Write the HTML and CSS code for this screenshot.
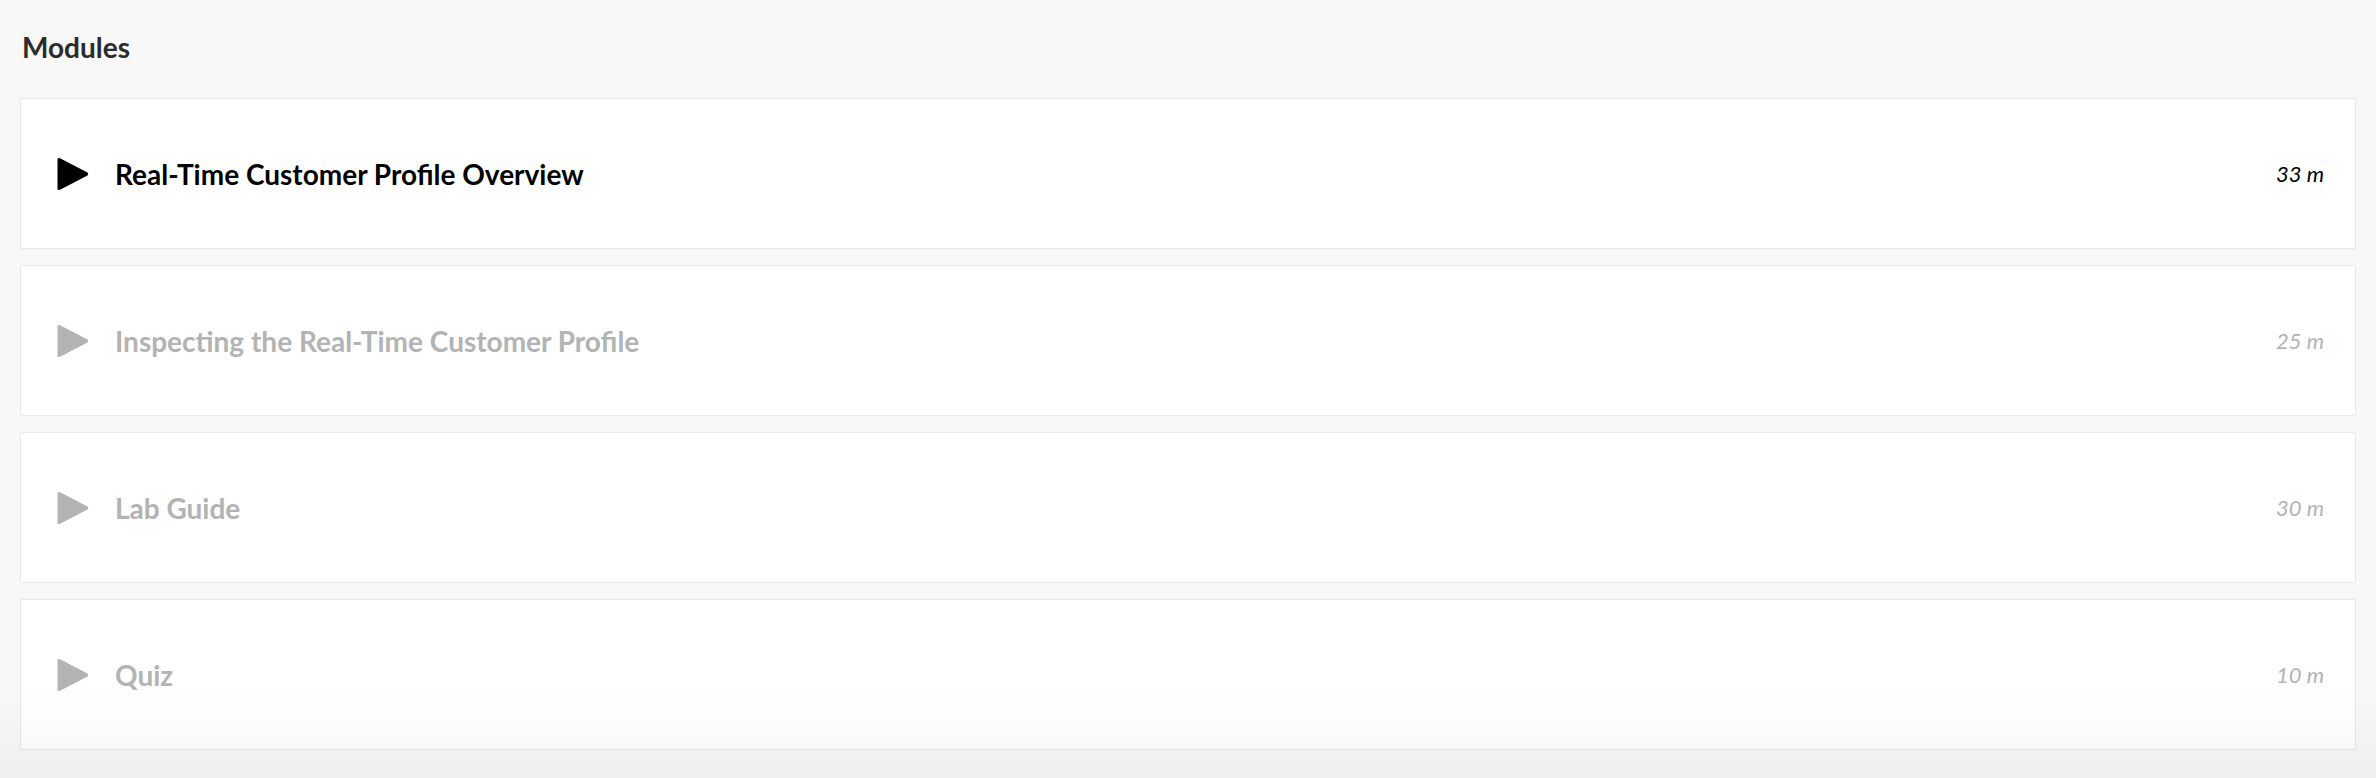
FILE: index.html
```html
<!DOCTYPE html>
<html lang="en">
<head>
<meta charset="utf-8">
<title>Modules</title>
<link rel="stylesheet" href="styles.css">
</head>
<body>
<main class="modules">
  <h2 class="modules-title">Modules</h2>
  <ul class="module-list">
    <li class="module-card is-active">
      <svg class="play-icon" viewBox="0 0 32 34" width="32" height="34" aria-hidden="true"><path d="M3 1.2 L30.5 15.6 Q32 17 30.5 18.4 L3 32.8 Q0.5 33.8 0.5 31.2 L0.5 2.8 Q0.5 0.2 3 1.2 Z"/></svg>
      <span class="module-name">Real-Time Customer Profile Overview</span>
      <span class="module-time">33 m</span>
    </li>
    <li class="module-card">
      <svg class="play-icon" viewBox="0 0 32 34" width="32" height="34" aria-hidden="true"><path d="M3 1.2 L30.5 15.6 Q32 17 30.5 18.4 L3 32.8 Q0.5 33.8 0.5 31.2 L0.5 2.8 Q0.5 0.2 3 1.2 Z"/></svg>
      <span class="module-name">Inspecting the Real-Time Customer Profile</span>
      <span class="module-time">25 m</span>
    </li>
    <li class="module-card">
      <svg class="play-icon" viewBox="0 0 32 34" width="32" height="34" aria-hidden="true"><path d="M3 1.2 L30.5 15.6 Q32 17 30.5 18.4 L3 32.8 Q0.5 33.8 0.5 31.2 L0.5 2.8 Q0.5 0.2 3 1.2 Z"/></svg>
      <span class="module-name">Lab Guide</span>
      <span class="module-time">30 m</span>
    </li>
    <li class="module-card">
      <svg class="play-icon" viewBox="0 0 32 34" width="32" height="34" aria-hidden="true"><path d="M3 1.2 L30.5 15.6 Q32 17 30.5 18.4 L3 32.8 Q0.5 33.8 0.5 31.2 L0.5 2.8 Q0.5 0.2 3 1.2 Z"/></svg>
      <span class="module-name">Quiz</span>
      <span class="module-time">10 m</span>
    </li>
  </ul>
</main>
<div class="bottom-fade"></div>
</body>
</html>
```

FILE: styles.css
```css
html, body {
  margin: 0;
  padding: 0;
  background: #f8f8f8;
}

body {
  font-family: Lato, "Open Sans", "Liberation Sans", sans-serif;
  color: #2c2c2c;
  height: 778px;
  overflow: hidden;
}

.modules {
  padding: 31px 20px 0 20px;
}

.modules-title {
  margin: 0 0 35px 2px;
  font-size: 28px;
  line-height: 32px;
  font-weight: 700;
  color: #2c2c2c;
}

.module-list {
  list-style: none;
  margin: 0;
  padding: 0;
  display: flex;
  flex-direction: column;
  gap: 16px;
}

.module-card {
  box-sizing: border-box;
  height: 151px;
  display: flex;
  align-items: center;
  background: #ffffff;
  border: 1px solid #e8e8e8;
  border-radius: 2px;
  padding: 0 31px 0 36px;
  color: #b3b3b3;
}

.module-card.is-active {
  color: #000000;
}

.play-icon {
  flex: none;
  fill: currentColor;
  margin-right: 26px;
}

.module-name {
  flex: 1;
  font-size: 28px;
  font-weight: 700;
  line-height: 32px;
}

.module-time {
  font-size: 22px;
  font-style: italic;
  font-weight: 400;
  line-height: 28px;
}

.bottom-fade {
  position: fixed;
  left: 0;
  right: 0;
  bottom: 0;
  height: 90px;
  pointer-events: none;
  background: linear-gradient(to bottom, rgba(0,0,0,0) 0%, rgba(0,0,0,0.035) 100%);
}
```
